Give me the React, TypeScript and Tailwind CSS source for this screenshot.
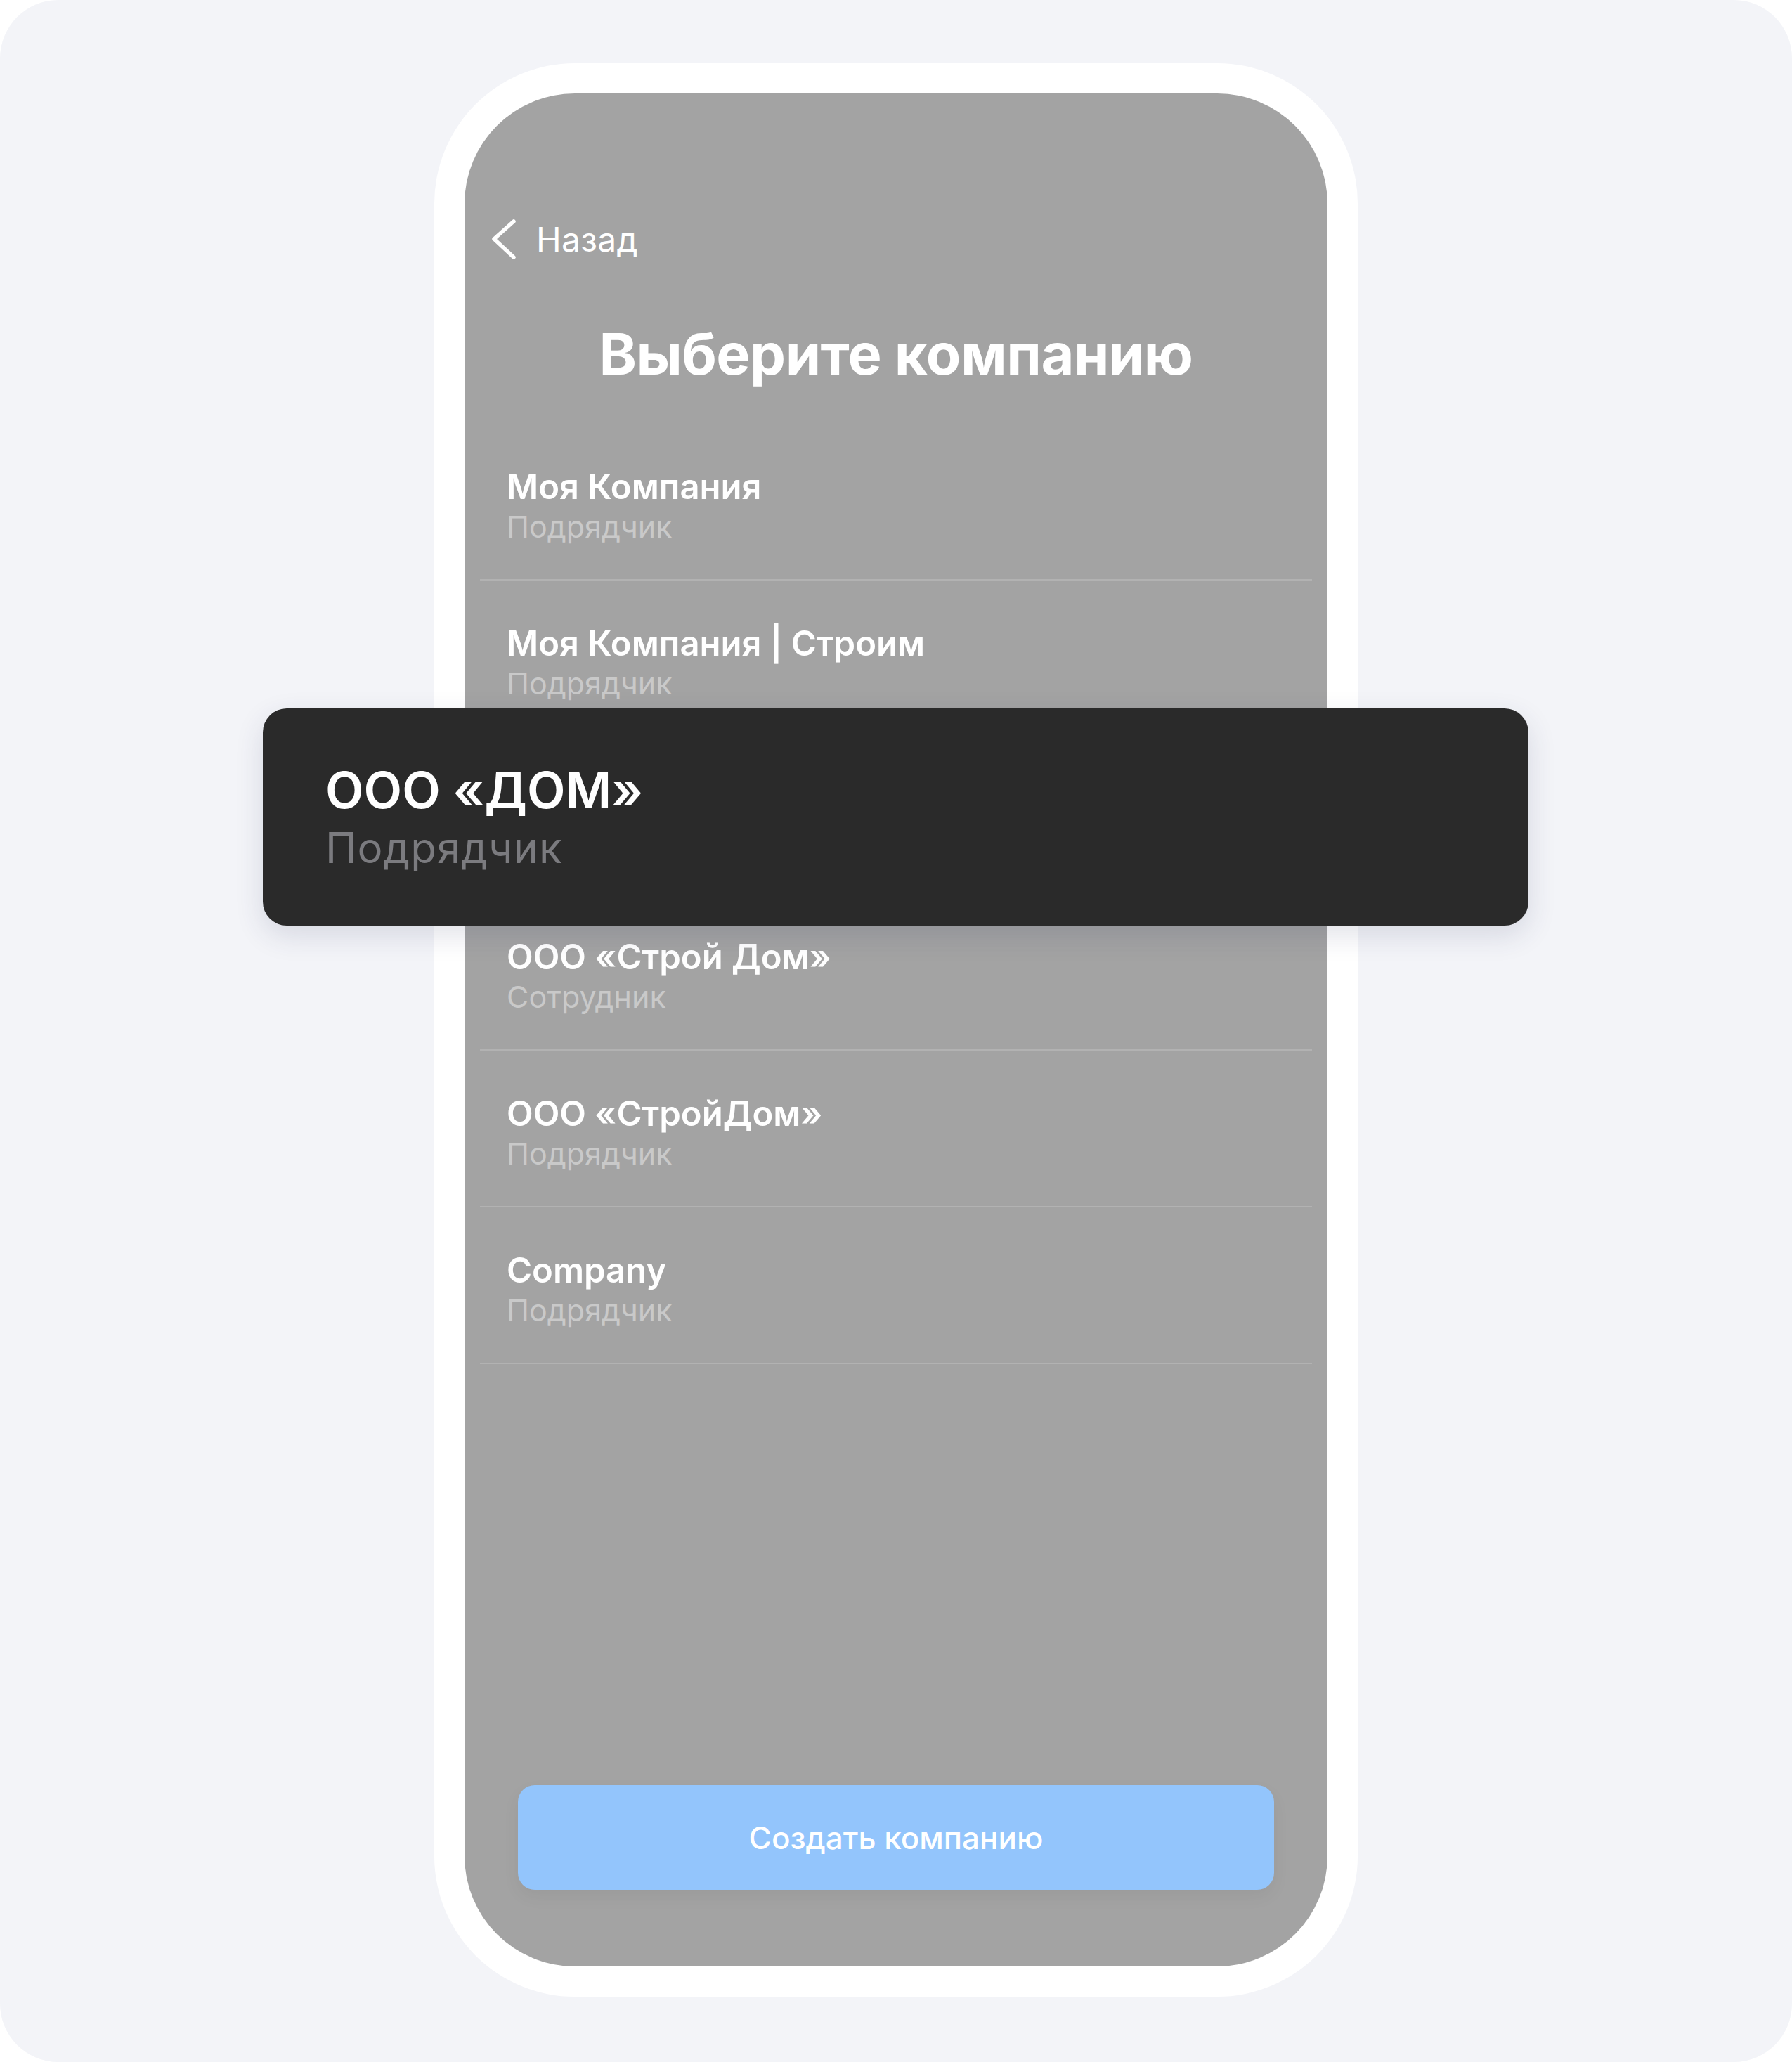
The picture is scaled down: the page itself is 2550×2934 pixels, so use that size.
import React from "react";

const items = [
  { title: "Моя Компания", sub: "Подрядчик", hidden: false },
  { title: "Моя Компания | Строим", sub: "Подрядчик", hidden: false },
  { title: "ООО «ДОМ»", sub: "Подрядчик", hidden: true },
  { title: "ООО «Строй Дом»", sub: "Сотрудник", hidden: false },
  { title: "ООО «СтройДом»", sub: "Подрядчик", hidden: false },
  { title: "Company", sub: "Подрядчик", hidden: false },
];

export default function App() {
  return (
    <div className="w-full bg-white" style={{ fontFamily: "Inter, 'Noto Sans', sans-serif" }}>
      <div className="relative h-[2934px] w-full rounded-[83px] bg-[#f3f4f8] flex justify-center pt-[90px]">
        {/* phone frame */}
        <div className="w-[1314px] h-[2751px] bg-white rounded-[200px] p-[43px]">
          <div className="w-full h-full bg-[#a3a3a3] rounded-[157px] flex flex-col">
            {/* back row */}
            <div className="pt-[170px] pl-[36px] flex items-center h-[246px]">
              <div className="h-[76px] flex items-center">
                <svg width="40" height="64" viewBox="0 0 40 64" className="block">
                  <polyline
                    points="34,6 6,31 34,57"
                    fill="none"
                    stroke="white"
                    strokeWidth="5.5"
                    strokeLinecap="round"
                    strokeLinejoin="round"
                  />
                </svg>
                <span className="ml-[26px] text-[48px] leading-[76px] text-white font-normal tracking-[0.3px]">Назад</span>
              </div>
            </div>
            {/* title */}
            <h1 className="mt-[75px] text-center text-[81px] leading-[100px] font-bold text-white tracking-[-0.5px]">
              Выберите компанию
            </h1>
            {/* list */}
            <div className="mt-[49px] px-[22px]">
              {items.map((it, i) => (
                <div key={i} className="px-[38px] pt-[62px] pb-[47px] border-b-2 border-[#b2b2b2]">
                  <div className={"text-[49px] leading-[56px] font-semibold text-white " + (it.hidden ? "invisible" : "")}>{it.title}</div>
                  <div className={"text-[43px] leading-[56px] font-normal text-[#c9c9c9] " + (it.hidden ? "invisible" : "")}>{it.sub}</div>
                </div>
              ))}
            </div>
            {/* button */}
            <div className="mt-auto mb-[109px] px-[76px]">
              <button className="w-full h-[149px] rounded-[24px] bg-[#93c5fc] text-white text-[44px] font-medium shadow-[0_10px_24px_rgba(0,0,0,0.05)]">
                Создать компанию
              </button>
            </div>
          </div>
        </div>

        {/* highlighted overlay card */}
        <div className="absolute left-[374px] top-[1008px] w-[1801px] h-[309px] rounded-[34px] bg-[#2a2a2a] shadow-[0_14px_40px_rgba(40,50,90,0.14)] pl-[89px] pt-[76px]">
          <div className="text-[71px] leading-[80px] font-semibold text-white">ООО «ДОМ»</div>
          <div className="mt-[7px] text-[60px] leading-[70px] font-normal text-[#7b7b7f] tracking-[1px]">Подрядчик</div>
        </div>
      </div>
    </div>
  );
}
